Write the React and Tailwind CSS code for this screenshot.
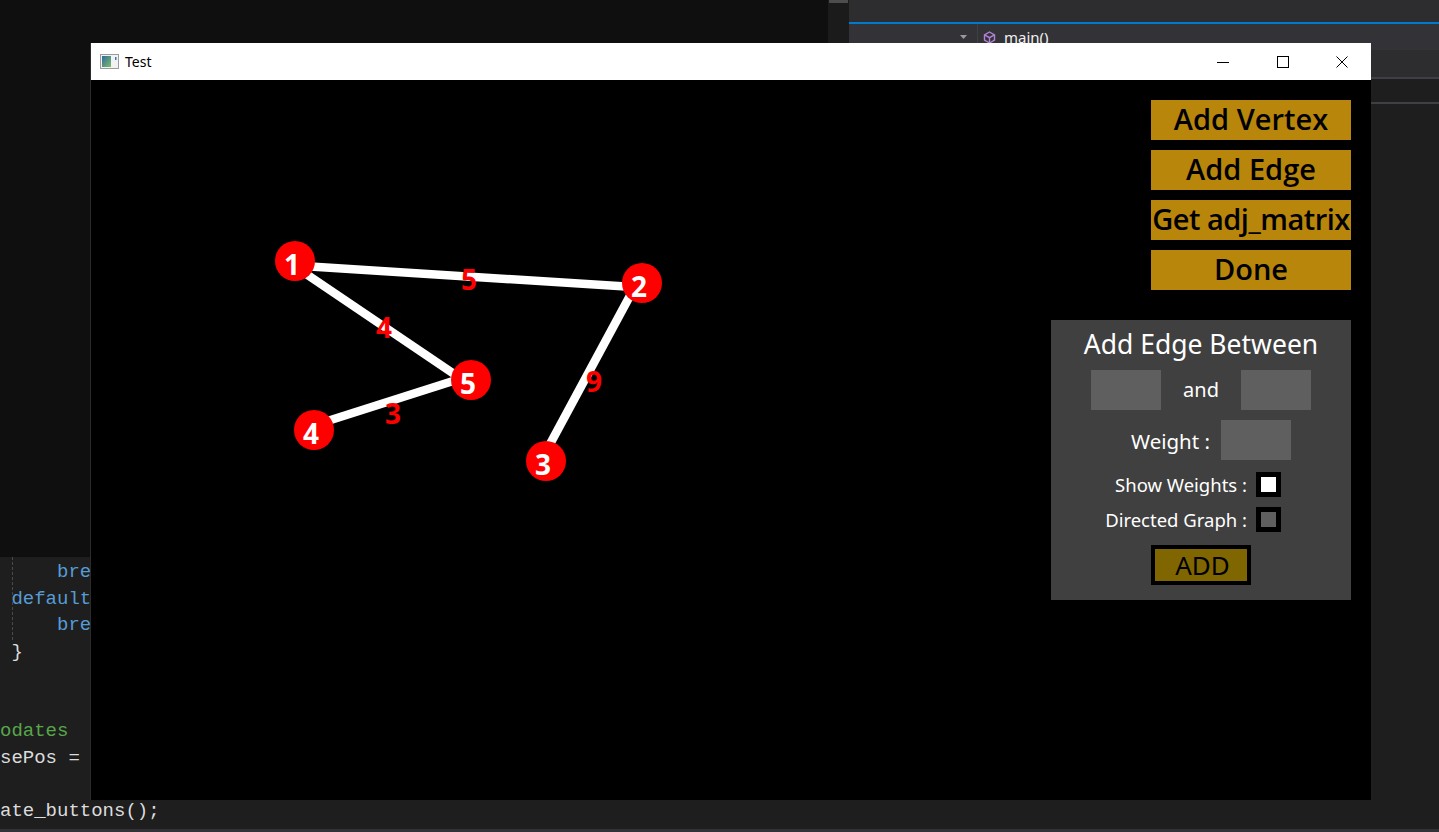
import React from "react";

// only the parts of each line that show beside the window
const codeLines = [
  [{ t: "     bre", c: "text-[#569cd6]" }],
  [{ t: " default", c: "text-[#569cd6]" }],
  [{ t: "     bre", c: "text-[#569cd6]" }],
  [{ t: " }", c: "text-[#dcdcdc]" }],
  [],
  [],
  [{ t: "odates", c: "text-[#57a64a]" }],
  [{ t: "sePos = ", c: "text-[#dcdcdc]" }],
  [],
  [{ t: "ate_buttons();", c: "text-[#dcdcdc]" }],
];

const nodes = [
  { id: 1, x: 204, y: 181 },
  { id: 2, x: 551, y: 203 },
  { id: 3, x: 455, y: 381 },
  { id: 4, x: 223, y: 350 },
  { id: 5, x: 380, y: 300 },
];

// edges are drawn from -> to, the stroke sits on one side of the centre line
const edges = [
  { from: 1, to: 2, w: 5, lx: 378, ly: 200 },
  { from: 1, to: 5, w: 4, lx: 293, ly: 248 },
  { from: 5, to: 4, w: 3, lx: 302, ly: 334 },
  { from: 2, to: 3, w: 9, lx: 503, ly: 302 },
];

const menuButtons = [
  { label: "Add Vertex", cls: "" },
  { label: "Add Edge", cls: "" },
  { label: "Get adj_matrix", cls: "tracking-[-0.5px]" },
  { label: "Done", cls: "" },
];

const NavBar = () => (
  <div className="h-[26px] bg-[#333337] flex items-center pl-[111px]">
    <svg width="7" height="4" viewBox="0 0 7 4">
      <path d="M0 0 L7 0 L3.5 4 Z" fill="#9a9a9a" />
    </svg>
    <div className="ml-[10px] w-px h-full bg-[#3f3f46]" />
    <svg className="ml-[5px]" width="13" height="13" viewBox="0 0 13 13" fill="none" stroke="#b180d7" strokeWidth="1.4">
      <path d="M6.5 1 L11.5 3.8 L11.5 9.2 L6.5 12 L1.5 9.2 L1.5 3.8 Z" />
      <path d="M1.5 3.8 L6.5 6.6 L11.5 3.8 M6.5 6.6 L6.5 12" />
    </svg>
    <span className="ml-[8px] text-[15px] text-[#f1f1f1] font-['Noto_Sans',sans-serif]">main()</span>
  </div>
);

const CodeEditor = () => (
  <div className="relative flex-1 overflow-hidden pt-[2px]">
    <div className="absolute left-[12px] top-0 h-[83px] border-l border-dashed border-[#4a4a4a]" />
    <div className="whitespace-pre text-[19px] leading-[26.5px] font-['Liberation_Mono',monospace]">
      {codeLines.map((line, i) => (
        <div key={i} className="h-[26.5px]">
          {line.map((seg, j) => (
            <span key={j} className={seg.c}>
              {seg.t}
            </span>
          ))}
        </div>
      ))}
    </div>
  </div>
);

const TitleBar = () => (
  <div className="h-[37px] bg-white flex items-center pl-[9px]">
    <svg width="19" height="15" viewBox="0 0 19 15">
      <defs>
        <linearGradient id="appicon" x1="0" y1="0" x2="1" y2="1">
          <stop offset="0" stopColor="#2d6c9c" />
          <stop offset="1" stopColor="#7fbd6c" />
        </linearGradient>
      </defs>
      <rect x="0.5" y="0.5" width="18" height="14" fill="#f2f2f2" stroke="#9c9c9c" />
      <rect x="2" y="2" width="9" height="11" fill="url(#appicon)" />
      <rect x="15" y="3" width="1.5" height="3" fill="#3b78c4" />
    </svg>
    <span className="ml-[6px] text-[14px] text-black font-['Noto_Sans',sans-serif]">Test</span>
    <div className="ml-auto flex h-full">
      <div className="w-[60px] flex items-center justify-center">
        <svg width="12" height="12" viewBox="0 0 12 12">
          <path d="M0 6.5 H12" stroke="#000" strokeWidth="1" />
        </svg>
      </div>
      <div className="w-[60px] flex items-center justify-center">
        <svg width="12" height="12" viewBox="0 0 12 12">
          <rect x="0.5" y="0.5" width="11" height="11" fill="none" stroke="#000" strokeWidth="1" />
        </svg>
      </div>
      <div className="w-[58px] flex items-center justify-center">
        <svg width="12" height="12" viewBox="0 0 12 12">
          <path d="M0.5 0.5 L11.5 11.5 M11.5 0.5 L0.5 11.5" stroke="#000" strokeWidth="1" />
        </svg>
      </div>
    </div>
  </div>
);

const Graph = () => {
  const pos = Object.fromEntries(nodes.map((n) => [n.id, n]));
  return (
    <svg className="absolute inset-0" width="1280" height="720">
      {edges.map((e) => {
        const a = pos[e.from];
        const b = pos[e.to];
        const dx = b.x - a.x;
        const dy = b.y - a.y;
        const len = Math.hypot(dx, dy);
        const ox = (-dy / len) * 4.5;
        const oy = (dx / len) * 4.5;
        return (
          <line
            key={`${e.from}-${e.to}`}
            x1={a.x + ox}
            y1={a.y + oy}
            x2={b.x + ox}
            y2={b.y + oy}
            stroke="#fff"
            strokeWidth="8.5"
          />
        );
      })}
      {edges.map((e) => (
        <text
          key={`w${e.from}-${e.to}`}
          x={e.lx}
          y={e.ly + 10}
          textAnchor="middle"
          fill="#ff0000"
          fontSize="28"
          fontWeight="700"
          fontFamily="'Open Sans', 'Noto Sans', sans-serif"
        >
          {e.w}
        </text>
      ))}
      {nodes.map((n) => (
        <g key={n.id}>
          <circle cx={n.x} cy={n.y} r="20" fill="#ff0000" />
          <text
            x={n.x - 3}
            y={n.y + 14}
            textAnchor="middle"
            fill="#fff"
            fontSize="28"
            fontWeight="700"
            fontFamily="'Open Sans', 'Noto Sans', sans-serif"
          >
            {n.id}
          </text>
        </g>
      ))}
    </svg>
  );
};

const Checkbox = ({ on }) => (
  <div className={`w-[25px] h-[25px] border-[5px] border-black ${on ? "bg-white" : "bg-[#5f5f5f]"}`} />
);

const EdgePanel = () => (
  <div className="mt-[20px] w-[300px] h-[280px] bg-[#404040] flex flex-col pt-[8px] text-white font-['Noto_Sans',sans-serif]">
    <div className="text-[26.5px] leading-[32px] text-center">Add Edge Between</div>
    <div className="mt-[10px] h-[40px] flex items-center justify-between px-[40px]">
      <div className="w-[70px] h-[40px] bg-[#5f5f5f]" />
      <span className="text-[20px]">and</span>
      <div className="w-[70px] h-[40px] bg-[#5f5f5f]" />
    </div>
    <div className="mt-[10px] h-[40px] flex items-center justify-end gap-[11px] pr-[60px]">
      <span className="text-[20.5px] pt-[3px]">Weight :</span>
      <div className="w-[70px] h-[40px] bg-[#5f5f5f]" />
    </div>
    <div className="mt-[12px] h-[25px] flex items-center justify-end gap-[9px] pr-[70px]">
      <span className="text-[18.5px]">Show Weights :</span>
      <Checkbox on />
    </div>
    <div className="mt-[10px] h-[25px] flex items-center justify-end gap-[9px] pr-[70px]">
      <span className="text-[18.5px]">Directed Graph :</span>
      <Checkbox />
    </div>
    <div className="mt-[13px] flex justify-center">
      <div className="w-[100px] h-[40px] border-[4px] border-black bg-[#806600] flex items-center justify-center pl-[3px] text-[26px] leading-none text-black">
        ADD
      </div>
    </div>
  </div>
);

const AppWindow = () => (
  <div className="absolute left-[90px] top-[43px] w-[1281px] flex flex-col border-l border-[#2b2b2b]">
    <TitleBar />
    <div className="relative w-[1280px] h-[720px] bg-black flex justify-end pt-[20px] pr-[20px]">
      <Graph />
      <div className="relative flex flex-col items-end gap-[10px]">
        {menuButtons.map((b) => (
          <div
            key={b.label}
            className={`w-[200px] h-[40px] bg-[#b8860b] flex items-center justify-center pb-[4px] text-[29px] leading-none font-semibold text-black whitespace-nowrap font-['Open_Sans',sans-serif] ${b.cls}`}
          >
            {b.label}
          </div>
        ))}
        <EdgePanel />
      </div>
    </div>
  </div>
);

export default function App() {
  return (
    <div className="relative w-[1439px] h-[832px] overflow-hidden bg-[#1e1e1e] flex flex-col font-['Noto_Sans',sans-serif]">
      <div className="h-[557px] shrink-0 flex">
        <div className="w-[828px] bg-[#0f0f0f]" />
        <div className="w-[21px] bg-[#1b1b1b] flex flex-col">
          <div className="h-[3px] mx-[1px] bg-[#4d4d4d]" />
        </div>
        <div className="flex-1 flex flex-col">
          <div className="h-[22px] bg-[#2d2d30]" />
          <div className="h-[2px] bg-[#007acc]" />
          <NavBar />
          <div className="h-[27px] bg-[#2d2d30]" />
          <div className="h-[2px] bg-[#3f3f46]" />
          <div className="h-[23px]" />
          <div className="h-[2px] bg-[#3f3f46]" />
        </div>
      </div>
      <CodeEditor />
      <div className="h-[3px] shrink-0 bg-[#333337]" />
      <AppWindow />
    </div>
  );
}
